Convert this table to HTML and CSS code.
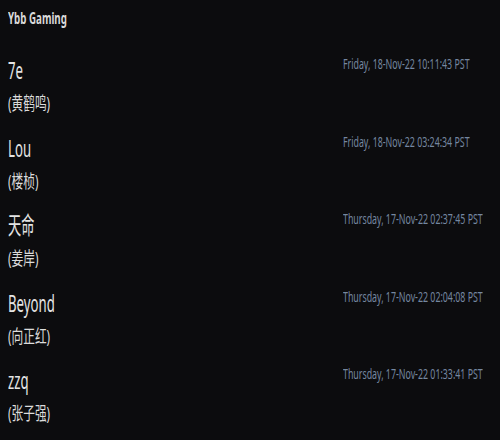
FILE: index.html
```html
<!DOCTYPE html>
<html>
<head>
<meta charset="utf-8">
<link rel="stylesheet" href="styles.css">
</head>
<body>
<div class="page">
  <div class="title"><span class="sq sq-title">Ybb Gaming</span></div>
  <div class="list">
    <div class="row">
      <div class="who">
        <div class="name"><span class="sq sq-name">7e</span></div>
        <div class="sub"><span class="sq sq-sub">(黄鹤鸣)</span></div>
      </div>
      <div class="date"><span class="sq sq-date">Friday, 18-Nov-22 10:11:43 PST</span></div>
    </div>
    <div class="row">
      <div class="who">
        <div class="name"><span class="sq sq-name">Lou</span></div>
        <div class="sub"><span class="sq sq-sub">(楼桢)</span></div>
      </div>
      <div class="date"><span class="sq sq-date">Friday, 18-Nov-22 03:24:34 PST</span></div>
    </div>
    <div class="row">
      <div class="who">
        <div class="name"><span class="sq sq-name">天命</span></div>
        <div class="sub"><span class="sq sq-sub">(姜岸)</span></div>
      </div>
      <div class="date"><span class="sq sq-date">Thursday, 17-Nov-22 02:37:45 PST</span></div>
    </div>
    <div class="row">
      <div class="who">
        <div class="name"><span class="sq sq-name">Beyond</span></div>
        <div class="sub"><span class="sq sq-sub">(向正红)</span></div>
      </div>
      <div class="date"><span class="sq sq-date">Thursday, 17-Nov-22 02:04:08 PST</span></div>
    </div>
    <div class="row">
      <div class="who">
        <div class="name"><span class="sq sq-name">zzq</span></div>
        <div class="sub"><span class="sq sq-sub">(张子强)</span></div>
      </div>
      <div class="date"><span class="sq sq-date">Thursday, 17-Nov-22 01:33:41 PST</span></div>
    </div>
  </div>
</div>
</body>
</html>
```
FILE: styles.css
```css
html, body {
  margin: 0;
  padding: 0;
  background: #0c0c0e;
}
body {
  width: 500px;
  height: 440px;
  font-family: "Noto Sans", "Noto Sans CJK SC", sans-serif;
}
.page {
  padding: 8px 0 0 8px;
}
.sq {
  display: block;
  width: max-content;
  transform-origin: 0 50%;
  white-space: nowrap;
}
.title {
  font-size: 15.5px;
  font-weight: 700;
  line-height: 20px;
  color: #dadada;
}
.sq-title { transform: scaleX(0.63); }
.list {
  margin-top: 28px;
  display: flex;
  flex-direction: column;
  gap: 19.5px;
}
.row {
  display: flex;
  align-items: flex-start;
}
.who {
  flex: none;
  width: 335px;
  display: flex;
  flex-direction: column;
  gap: 8px;
}
.name {
  font-size: 24px;
  line-height: 28px;
  color: #e4e4e4;
}
.sq-name { transform: scaleX(0.55); }
.sub {
  font-size: 18px;
  line-height: 22px;
  color: #dcdcdc;
}
.sq-sub { transform: scaleX(0.65); }
.date {
  flex: 1;
  min-width: 0;
  font-size: 14px;
  line-height: 15px;
  color: #7587a0;
}
.sq-date { transform: scaleX(0.63); }
```
